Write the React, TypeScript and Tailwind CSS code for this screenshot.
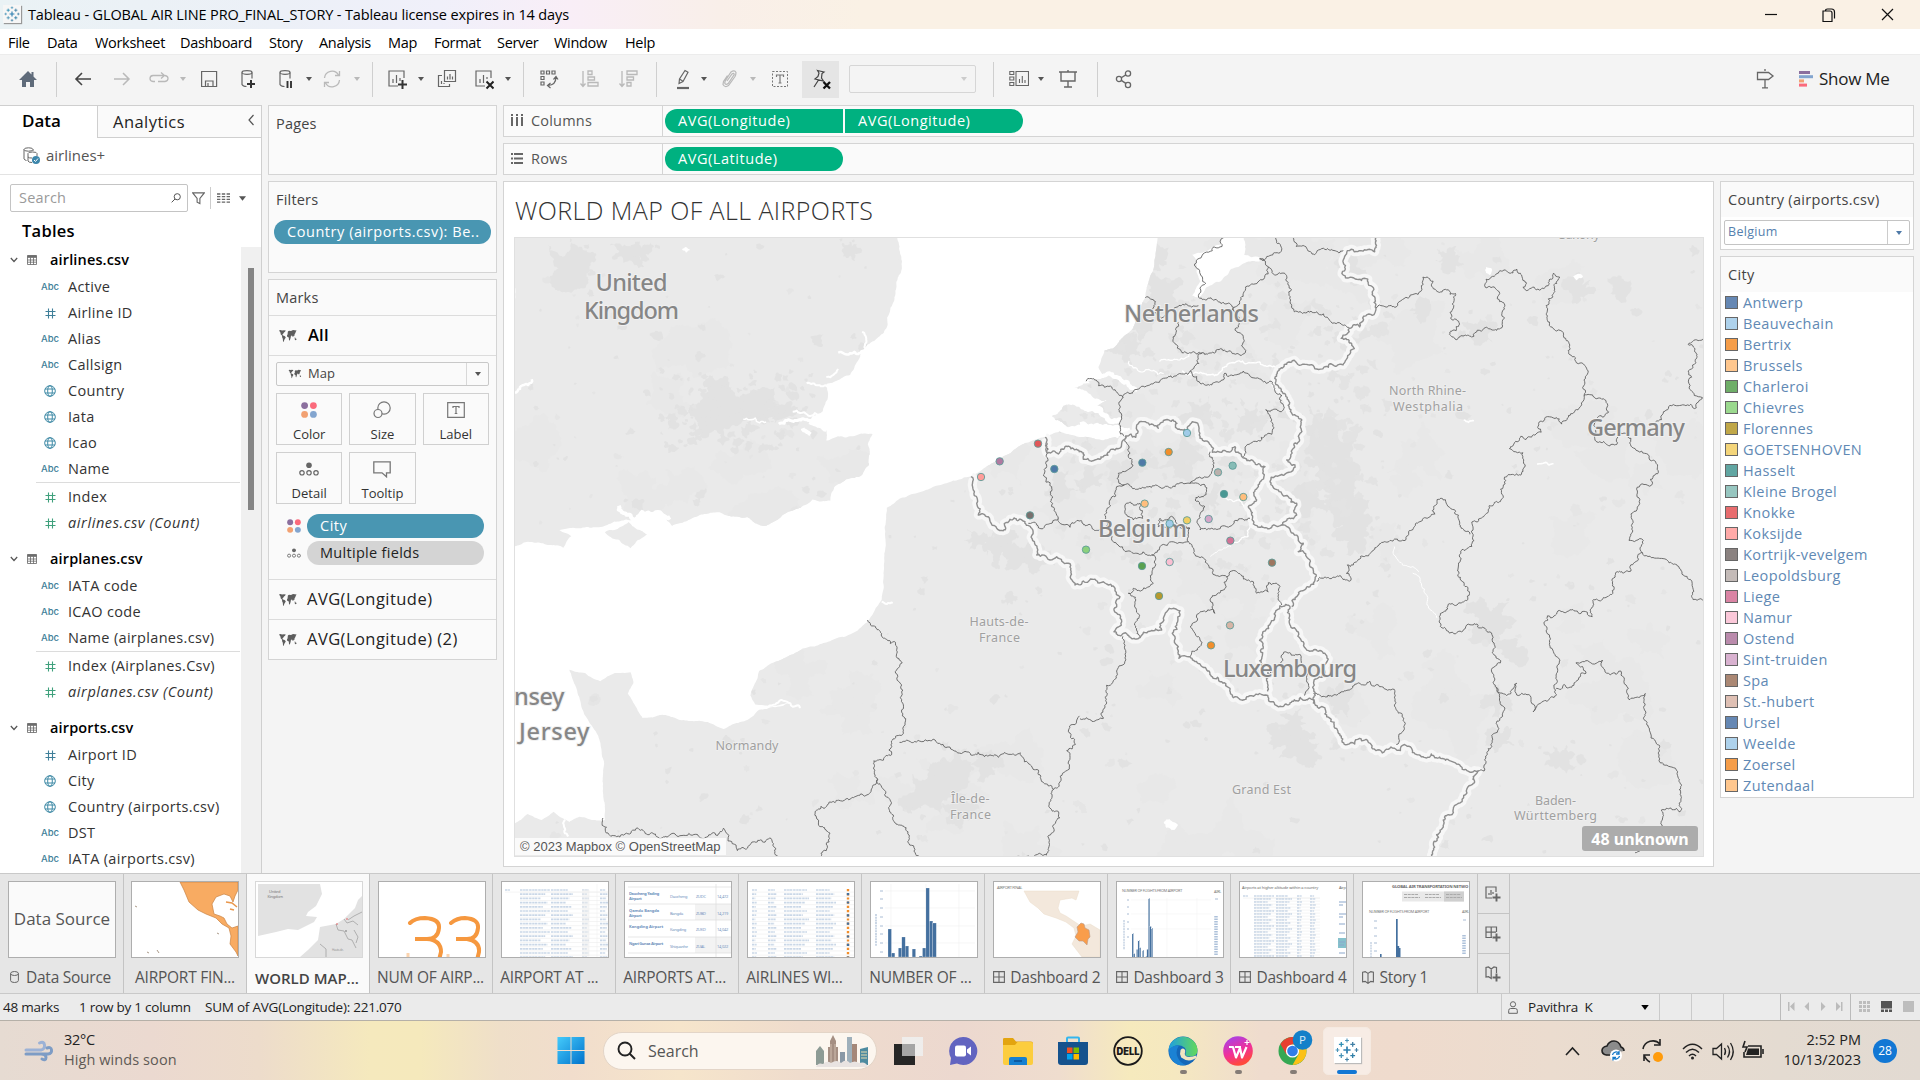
import React from "react";

/* ------------------------------------------------------------------ */
/* Geometry helpers                                                    */
/* ------------------------------------------------------------------ */
type P = [number, number];

function space(ox: number, oy: number, sx: number, sy: number) {
  return (s: string): P[] =>
    s
      .trim()
      .split(/\s+/)
      .map((t) => {
        const [x, y] = t.split(",").map(Number);
        return [ox + x / sx, oy + y / sy] as P;
      });
}
const W = space(510, 220, 2.529, 2.45);
const E = space(1080, 220, 2.45, 2.45);
const C = space(960, 400, 3, 3);

function rng(seed: number) {
  let a = seed >>> 0;
  return () => {
    a = (a + 0x6d2b79f5) >>> 0;
    let t = a;
    t = Math.imul(t ^ (t >>> 15), t | 1);
    t ^= t + Math.imul(t ^ (t >>> 7), t | 61);
    return ((t ^ (t >>> 14)) >>> 0) / 4294967296;
  };
}

function rough(pts: P[], amp = 0.3, closed = false, seed = 7): string {
  const r = rng(seed + Math.round(pts[0][0] * 13 + pts[0][1]));
  const out: P[] = [];
  const split = (a: P, b: P) => {
    const dx = b[0] - a[0];
    const dy = b[1] - a[1];
    const len = Math.hypot(dx, dy);
    if (len < 2.2) {
      out.push(b);
      return;
    }
    const k = (r() - 0.5) * 2 * Math.min(amp, 3 / len);
    const m: P = [(a[0] + b[0]) / 2 - dy * k, (a[1] + b[1]) / 2 + dx * k];
    split(a, m);
    split(m, b);
  };
  out.push(pts[0]);
  const all = closed ? [...pts, pts[0]] : pts;
  for (let i = 1; i < all.length; i++) split(all[i - 1], all[i]);
  return (
    out
      .map((p, i) => (i ? "L" : "M") + p[0].toFixed(1) + " " + p[1].toFixed(1))
      .join("") + (closed ? "Z" : "")
  );
}

/* ------------------------------------------------------------------ */
/* Map data                                                            */
/* ------------------------------------------------------------------ */
const britain = rough(
  W(
    "8,35 975,35 985,75 988,130 975,180 962,215 952,265 935,285 905,305 880,345 860,380 830,392 800,402 803,440 790,470 765,480 755,500 800,515 800,540 860,530 917,524 905,550 908,600 890,625 850,635 820,655 810,688 765,685 735,705 690,722 645,750 600,728 530,716 470,728 410,750 390,722 330,712 310,735 250,745 180,755 125,760 155,775 135,803 90,795 35,790 8,800",
  ),
  0.09,
  true,
);
const wight = rough(W("240,765 300,740 347,770 305,804"), 0.1, true);
const continent = rough(
  [
    ...W(
      "8,1568 8,1480 45,1455 80,1470 110,1450 150,1475 175,1462 240,1470 240,1440 235,1390 238,1330 225,1270 200,1230 180,1190 165,1140 150,1102 190,1110 228,1130 265,1110 305,1108 312,1135 298,1160 320,1195 335,1220 385,1212 430,1225 500,1230 540,1247 600,1225 630,1200 710,1182 660,1192 620,1187 608,1165 630,1105 680,1080 740,1050 800,1035 850,1020 905,985 925,950 940,930 945,870 950,800 953,705 985,683 1050,662 1165,628 1230,590 1300,548 1350,532 1390,518 1440,532 1500,540 1545,530",
    ),
    ...E("95,500 60,480 40,455 70,440 30,410 20,395 60,385 45,360 60,320 80,315 130,265 160,190 180,120 190,35 1540,35 1540,1568"),
  ],
  0.06,
  true,
);
const islands = [
  W("1370,480 1400,455 1450,465 1500,475 1560,480 1560,505 1480,510 1420,512"),
  W("1425,412 1460,400 1510,405 1570,440 1540,450 1480,438"),
].map((p) => rough(p, 0.15, true));
const waters = [
  rough(E("285,100 275,85 300,80 345,60 350,35 400,35 402,85 440,92 440,102 370,120 345,150 310,165 290,190 275,185 295,150"), 0.1, true),
  rough(E("205,1475 220,1468 240,1482 225,1495"), 0.2, true),
  rough(E("995,115 1008,118 1005,135 995,130"), 0.2, true),
  rough(E("1208,138 1225,132 1232,140 1215,148"), 0.2, true),
  rough(W("435,72 445,66 456,74 445,80"), 0.2, true),
];
const streams: [P[], number][] = [
  [W("900,322 860,326 830,325"), 2.5],
  [W("905,318 890,275"), 2],
  [W("805,408 780,405 750,400"), 2],
  [W("800,385 830,365"), 2],
  [W("790,475 715,470"), 2],
  [W("680,500 730,490 770,500 800,515"), 3],
  [W("740,510 760,525"), 4],
  [W("590,488 620,485 648,495"), 1.4],
  [W("275,700 300,722 335,740"), 4],
  [W("330,715 405,728"), 4],
  [W("8,430 55,390"), 2.5],
  [W("630,1192 700,1180 735,1195"), 2],
  [W("140,1470 148,1510"), 2],
  [W("940,935 968,938"), 2],
  [W("1400,518 1470,505 1520,525 1568,515"), 5],
  [E("0,455 40,460 70,490 100,490"), 5],
  [E("0,500 50,515 95,530"), 4],
  [E("40,380 90,385 140,415"), 4],
  [E("120,345 130,362 190,378 205,376"), 1.2],
  [E("195,347 240,343 270,325"), 1.2],
  [E("250,370 340,375 370,350 440,348 480,360"), 1.4],
  [E("770,800 790,845 830,862"), 1],
  [E("815,865 850,920 850,940 875,975"), 1],
  [E("350,680 390,685 415,710"), 1.2],
  [E("418,750 412,775 370,790"), 1.2],
  [E("320,825 370,800"), 1],
  [E("940,490 965,492"), 1.6],
  [E("1120,598 1160,597"), 1.6],
];
const nations: string[] = [
  rough([
    ...C(
      "33,230 40,270 50,310 55,345 85,350 110,385 130,392 150,358 195,365 215,385 230,465 270,480 290,470 325,490 345,555 370,543 430,545 465,572 480,590 462,630 485,665 462,695 485,705 540,713 605,690 610,655 640,625 660,632 650,670 637,700 655,740 657,775 690,770 740,810 780,845 810,865 820,893",
    ),
    ...E(
      "440,1160 460,1165 500,1190 540,1170 575,1185 600,1195 625,1245 655,1285 685,1270 725,1300 785,1300 795,1285 840,1315 920,1330 975,1350 940,1410 890,1470 875,1520 868,1568",
    ),
  ]),
  rough(
    C(
      "255,112 262,160 295,162 315,140 365,155 370,178 420,178 465,150 490,120 497,108 527,112 530,75 560,68 595,85 615,60 640,60 650,85 680,95 697,65 715,75 720,115 752,135 757,157 800,155 825,140 855,175 915,200 905,240 885,270 890,300 865,320 875,345 880,372 930,385 965,375 1000,400 1030,430 1015,455 1050,480 1065,540 1050,560 1010,590 995,620",
    ),
  ),
  rough([
    ...C("965,375 1010,345 1010,310 985,290 955,270 930,245 1005,195 980,180 1000,145 1020,100 1015,50 985,0"),
    ...E("480,395 485,370 520,345 580,365 650,345 672,315 640,290 660,265 685,262 700,235 725,220 720,170 705,145 645,135 645,105 655,75 722,78 722,35"),
  ]),
  rough(E("515,950 490,945 440,1030 440,1080 465,1115 460,1155")),
  rough(E("515,950 520,1000 560,1055 605,1070 600,1110 570,1145 572,1185")),
];
const regions: string[] = [
  ...[
    "352,35 348,65 285,100 308,155 290,185 300,195 375,220 400,180 450,145 462,115 440,95 490,80 478,35",
    "520,35 530,65 575,85 600,72 645,75",
    "462,115 480,135 500,130 518,170 515,200 525,225 580,225 640,255 660,265",
    "160,190 185,200 175,225 200,240 260,205 290,210",
    "240,250 230,300 250,325 300,325 350,320 405,325 400,290 380,270 385,230 372,218",
    "300,325 270,370 200,390 140,415 105,435 60,410 40,392 15,395",
    "270,370 300,400 345,395 355,375 400,370 465,395",
    "105,435 98,460 108,530",
    "465,395 495,430 498,465 455,465 470,525 410,550 400,580",
    "725,215 775,213 835,175 840,140 865,150 875,175 920,180 915,215 908,240 930,255 905,280 925,292 965,285 990,265 1030,265 1040,240 1028,200 1020,170 993,165 995,145 1025,130 1070,120 1082,135 1085,165 1140,165 1160,130 1175,140 1160,180 1142,210 1150,250 1190,290 1200,330 1245,370 1235,430",
    "1235,430 1220,465 1180,500 1160,485 1125,495 1130,520 1080,530 1052,560 1085,570 1090,605 1080,625 1040,630 1030,690 1000,710 960,740 960,800 930,820 925,860 950,900 950,930 905,940 880,985 905,1012 960,992 1000,1010 1010,1060 1030,1085 1008,1105 1020,1145",
    "580,885 620,875 660,885 655,845 680,835 760,785 800,775 830,740 870,720 875,685 895,685 930,740 955,770",
    "1235,430 1285,440 1295,470 1260,500 1270,545 1315,550 1320,520 1350,535 1360,560 1415,600 1400,650 1365,655 1370,690 1350,720 1345,785 1380,785 1378,815 1350,860 1312,865 1305,915 1258,930 1255,972 1200,955 1145,970 1150,1040 1170,1100 1165,1160 1110,1205 1105,1170 1075,1165 1070,1135 1045,1165 1020,1145 1040,1200 1010,1280 990,1350 975,1350",
    "1378,815 1440,835 1500,890 1502,930 1540,932",
    "1410,495 1450,455 1510,460 1525,435 1505,430 1490,370 1510,340 1490,305 1540,290",
    "1165,1150 1210,1140 1240,1110 1215,1085 1280,1078 1290,1110 1325,1105 1345,1175 1385,1160 1395,1250 1420,1320 1465,1365 1470,1450 1425,1445 1430,1490 1360,1550",
    "572,1160 620,1165 710,1130 770,1150 775,1200 795,1230 775,1285",
    "465,1110 490,1090 495,1065 540,1065 555,1100 550,1165",
    "0,1222 58,1220 65,1140 105,1090 105,1020",
  ].map((s) => rough(E(s))),
  ...[
    "1440,1215 1415,1240 1430,1285 1408,1300 1415,1335 1375,1395 1310,1330 1290,1305 1200,1315 1060,1275 985,1280",
    "905,980 975,1035 992,1085 975,1110 990,1180 995,1250 975,1265 965,1310 920,1325 930,1370 950,1400 960,1450 1010,1515 1040,1568",
    "930,1370 900,1410 850,1418 778,1445 780,1480 808,1515 800,1545 775,1568",
    "1375,1395 1365,1440 1390,1465 1360,1510 1360,1550 1280,1568",
    "235,1465 255,1510 310,1495 400,1510 470,1505 525,1508 540,1490 575,1545 660,1515 680,1568",
  ].map((s) => rough(W(s))),
  ...[
    "257,130 260,200 250,225 275,260 275,320 295,355 250,385 205,370",
    "295,355 330,382 350,362 395,380 440,385 455,420 520,460 575,465 585,490 580,550 520,565 505,580 528,600 540,713",
    "497,108 510,160 510,205 475,220 477,250 530,268 600,262 690,250 755,215 760,180 750,155",
    "490,252 450,300 440,360 440,385",
    "690,250 735,255 730,290 705,300 735,320 720,390 800,380 870,355",
    "575,465 600,440 685,425 690,385 595,380 600,355 640,352 650,370 690,385",
    "685,425 715,470 765,525 800,530 810,515 830,515 880,545 890,580 925,575 925,548 960,560 965,615",
    "800,530 795,565 750,600 765,640 710,645 690,680 720,720 690,770",
    "495,315 540,310 548,355 520,360 495,340 495,315",
  ].map((s) => rough(C(s))),
];

const patches: { d: string; f: string }[] = (() => {
  const r = rng(91);
  const out: { d: string; f: string }[] = [];
  const blob = (x: number, y: number, rad: number, f: string, n = 7, low = 0.55) => {
    const pts: P[] = [];
    for (let i = 0; i < n; i++) {
      const a = (i / n) * Math.PI * 2;
      const q = rad * (low + r() * (1.15 - low));
      pts.push([x + Math.cos(a) * q, y + Math.sin(a) * q * 0.9]);
    }
    out.push({ d: rough(pts, 0.3, true), f });
  };
  for (let i = 0; i < 80; i++) blob(515 + r() * 1188, 238 + r() * 618, 20 + r() * 26, "#e8e8e8", 12, 0.3);
  const big: [number, number, number][] = [
    [570, 265, 24], [628, 252, 18], [735, 408, 36], [715, 420, 24], [760, 400, 26], [780, 412, 20], [640, 252, 12],
    [1160, 290, 22], [1140, 320, 20], [1155, 260, 15], [1125, 350, 18], [1200, 415, 22], [1250, 420, 20], [1130, 470, 20], [1180, 460, 22],
    [1320, 430, 24], [1330, 470, 26], [1345, 500, 24], [1310, 500, 18], [1355, 535, 20], [1330, 450, 22],
    [930, 790, 30], [950, 770, 22], [960, 810, 20], [985, 765, 16], [1000, 545, 20], [1020, 555, 18], [1040, 560, 16], [980, 540, 14],
    [1490, 620, 26], [1510, 650, 20], [1500, 700, 18], [1500, 740, 16], [1290, 735, 20], [1300, 750, 22], [1295, 720, 14], [1340, 700, 16],
    [1060, 490, 18], [1090, 480, 14], [1210, 500, 14], [1580, 290, 16], [1480, 330, 16], [1620, 290, 14], [1450, 260, 14], [1560, 760, 14], [1350, 270, 14],
    [1010, 600, 8], [1420, 310, 12], [850, 250, 10],
  ];
  big.forEach(([x, y, s]) => blob(x, y, s * 1.15, "#e2e2e2", 16, 0.3));
  for (let i = 0; i < 560; i++) blob(515 + r() * 1188, 238 + r() * 618, 1.5 + r() * r() * 8, r() > 0.35 ? "#e2e2e2" : "#e5e5e5", 7, 0.4);
  for (let i = 0; i < 260; i++) blob(1060 + r() * 330, 300 + r() * 270, 2 + r() * 7, "#e3e3e3", 8, 0.3);
  for (let i = 0; i < 90; i++) blob(660 + r() * 160, 370 + r() * 80, 2 + r() * 6, "#e2e2e2", 8, 0.3);
  return out;
})();

const dots: [number, number, string][] = [
  [234, 131, "#e15759"], [119, 184, "#b07aa1"], [63, 231, "#ff9d9a"], [283, 207, "#4e79a7"], [547, 188, "#4e79a7"],
  [626, 156, "#f28e2b"], [681, 99, "#a0cbe8"], [818, 197, "#86bcb6"], [774, 217, "#bab0ac"], [792, 282, "#499894"],
  [850, 291, "#ffbe7d"], [554, 311, "#ffbe7d"], [681, 361, "#f1ce63"], [629, 371, "#a0cbe8"], [746, 357, "#d4a6c8"],
  [811, 422, "#d37295"], [210, 346, "#79706e"], [378, 449, "#8cd17d"], [546, 498, "#59a14f"], [629, 486, "#fabfd2"],
  [936, 488, "#9d7660"], [597, 588, "#b6992d"], [810, 676, "#d7b5a6"], [753, 736, "#f28e2b"],
];

const placeNames: [string, number, number, number, number][] = [
  ["United", 595.5, 290.5, 72, 23.5],
  ["Kingdom", 584, 318.5, 95, 23.5],
  ["Netherlands", 1124, 322, 135, 23.5],
  ["Belgium", 1098, 536.5, 89, 23.5],
  ["Luxembourg", 1223, 676.5, 134, 23.5],
  ["Germany", 1587, 436, 98, 23.5],
  ["nsey", 514, 705, 50.5, 23.5],
  ["Jersey", 519, 739.5, 70.5, 23.5],
];
const regionNames: [string, number, number, number][] = [
  ["North Rhine-", 1389, 395, 77],
  ["Westphalia", 1393, 410.5, 70],
  ["Hauts-de-", 969.5, 626, 59],
  ["France", 979, 641.5, 41],
  ["Normandy", 715.5, 750, 63],
  ["Île-de-", 951, 803, 38.5],
  ["France", 950, 818.5, 41],
  ["Grand Est", 1232, 794, 59],
  ["Baden-", 1535, 805, 41],
  ["Württemberg", 1514, 820, 83],
  ["Saxony", 1559, 238.5, 41],
];

function BaseMap() {
  return (
    <svg viewBox="515 238 1188 618" className="block h-full w-full" preserveAspectRatio="none">
      <defs>
        <clipPath id="land">
          <path d={britain} />
          <path d={wight} />
          <path d={continent} />
          {islands.map((d, i) => (
            <path key={i} d={d} />
          ))}
        </clipPath>
      </defs>
      <rect x="515" y="238" width="1188" height="618" fill="#fff" />
      <g clipPath="url(#land)">
        <rect x="515" y="238" width="1188" height="618" fill="#eaeaea" />
        {patches.map((p, i) => (
          <path key={i} d={p.d} fill={p.f} />
        ))}
      </g>
      {waters.map((d, i) => (
        <path key={i} d={d} fill="#fff" />
      ))}
      {streams.map(([p, w], i) => (
        <path key={i} d={rough(p, 0.25)} fill="none" stroke="#fff" strokeWidth={w} strokeLinejoin="round" />
      ))}
      {nations.map((d, i) => (
        <path key={i} d={d} fill="none" stroke="#f7f7f7" strokeWidth="9" strokeLinejoin="round" />
      ))}
      {regions.map((d, i) => (
        <path key={i} d={d} fill="none" stroke="#585858" strokeWidth="0.85" />
      ))}
      {nations.map((d, i) => (
        <path key={i} d={d} fill="none" stroke="#8e8e8e" strokeWidth="1.400" strokeLinejoin="round" />
      ))}
      {placeNames.map(([t, x, y, w, s]) => (
        <text key={t} x={x} y={y} textLength={w} fontSize={s} fontWeight="500" fontFamily="'Noto Sans', sans-serif" fill="#868686" stroke="#f0f0f0" strokeWidth="2" paintOrder="stroke">
          {t}
        </text>
      ))}
      {regionNames.map(([t, x, y, w], i) => (
        <text key={i} x={x} y={y} textLength={w} fontSize="12.5" fontFamily="'Noto Sans', sans-serif" fill="#a0a0a0" stroke="#f0f0f0" strokeWidth="1.5" paintOrder="stroke">
          {t}
        </text>
      ))}
      {dots.map(([x, y, c], i) => (
        <circle key={i} cx={960 + x / 3} cy={400 + y / 3} r="3.7" fill={c} stroke="#5f9c98" strokeWidth="0.9" />
      ))}
    </svg>
  );
}

/* ------------------------------------------------------------------ */
/* Icons                                                               */
/* ------------------------------------------------------------------ */
function I({ children, c = "#666", k = "h-[22px] w-5", vb = "0 0 20 22", sw = 1.2 }: { children: React.ReactNode; c?: string; k?: string; vb?: string; sw?: number }) {
  return (
    <svg viewBox={vb} className={`${k} shrink-0`} fill="none" stroke={c} strokeWidth={sw}>
      {children}
    </svg>
  );
}
function Caret({ c = "#555", k = "" }: { c?: string; k?: string }) {
  return (
    <svg viewBox="0 0 6 4" className={`h-1 w-1.5 shrink-0 ${k}`}>
      <path d="M0 0H6L3 4Z" fill={c} />
    </svg>
  );
}
const Sep = ({ k = "" }: { k?: string }) => <span className={`h-[35px] w-px shrink-0 bg-[#cfcfcf] ${k}`} />;

const World = ({ k = "h-3.5 w-[18px]" }: { k?: string }) => (
  <svg viewBox="0 0 18 14" className={`${k} shrink-0`}>
    <path
      d="M0 1.600L1.500 1l1.500.4L5 1.200 6.800 1.600 6 2.800 5 3.600 4.200 4.800 3.400 5.200 4 6.400 5.600 7 6.800 8.200 6 9.800 5.200 11 4.800 13 4 12.200 3.800 9.800 3 8 3.200 6.800 1.800 5.400 1.400 3.400ZM8.200 4.200L9 3.200 8.800 2.400 10 1.800 12 2 14 1 17.600 1.600 16.800 2.800 16.400 4 15.600 5.200 15.400 6.800 14.600 7.800 14 6.600 13.200 8 12.600 6.400 12 6.800 11.600 9 10.800 11.400 10 11.200 9.800 8.600 8.200 7.800 8 6 9.200 4.800ZM15.400 9.600L17 9.200 17.600 10.800 16.200 11.200ZM15.600 8l.8.600-.4.400Z"
      fill="#5d5d5d"
    />
  </svg>
);
const Abc = () => <span className="font-['Inter',sans-serif] text-[9.500px] font-medium leading-none text-[#3f7f99]">Abc</span>;
const Hash = ({ c }: { c: string }) => (
  <I c={c} k="h-[11px] w-[11px]" vb="0 0 11 11" sw={1.1}>
    <path d="M3.500 .5v10M7.500 .5v10M.5 3.500h10M.5 7.500h10" />
  </I>
);
const Globe = () => (
  <I c="#3f8aa6" k="h-3 w-3" vb="0 0 12 12" sw={1}>
    <circle cx="6" cy="6" r="5.300" />
    <ellipse cx="6" cy="6" rx="2.300" ry="5.300" />
    <path d="M1 4h10M1 8h10" />
  </I>
);
const FourDots = ({ k = "h-4 w-4" }: { k?: string }) => (
  <svg viewBox="0 0 16 16" className={k}>
    <circle cx="3.600" cy="3.600" r="3.400" fill="#8b6f9e" />
    <circle cx="12.400" cy="3.600" r="3.400" fill="#fb6a7c" />
    <circle cx="3.600" cy="12.400" r="3.400" fill="#f2a172" />
    <circle cx="12.400" cy="12.400" r="3.400" fill="#83a5cf" />
  </svg>
);
const Detail = ({ k = "h-3.5 w-5" }: { k?: string }) => (
  <I k={k} vb="0 0 20 14" sw={1.2}>
    <circle cx="10" cy="3.200" r="2.800" fill="#666" stroke="none" />
    <circle cx="3" cy="10.800" r="2.200" />
    <circle cx="10" cy="10.800" r="2.200" />
    <circle cx="17" cy="10.800" r="2.200" />
  </I>
);
const DashIcon = () => (
  <I k="h-3 w-3" vb="0 0 12 12" sw={1.1}>
    <path d="M.6 .6h10.800v10.800H.6zM6 .6v10.800M.6 6h10.800" />
  </I>
);
const StoryIcon = () => (
  <I k="h-[13px] w-3" vb="0 0 12 13" sw={1.1}>
    <path d="M.6 1.200l2.600-.6L6 2.400 8.800 .6l2.600 .6v9.600l-2.600-.4L6 12.400 3.200 10.400l-2.600 .4zM6 2.400v10" />
  </I>
);
function TableauMark({ k = "" }: { k?: string }) {
  const plus = (x: number, y: number, s: number, c: string, w: number) => <path d={`M${x - s} ${y}h${2 * s}M${x} ${y - s}v${2 * s}`} stroke={c} strokeWidth={w} />;
  return (
    <svg viewBox="0 0 24 24" className={k}>
      {plus(12, 12, 3.6, "#2e7fb0", 1.7)}
      {plus(6.3, 6.3, 2.4, "#2f8fb5", 1.3)}
      {plus(17.7, 6.3, 2.4, "#3f7fa5", 1.3)}
      {plus(6.3, 17.7, 2.4, "#4a94b8", 1.3)}
      {plus(17.7, 17.7, 2.4, "#2f7fa8", 1.3)}
      {plus(12, 2.5, 1.9, "#4a94b8", 1.1)}
      {plus(12, 21.5, 1.9, "#3f7fa5", 1.1)}
      {plus(2.5, 12, 1.9, "#4a94b8", 1.1)}
      {plus(21.5, 12, 1.9, "#3f7fa5", 1.1)}
    </svg>
  );
}

/* ------------------------------------------------------------------ */
/* Window chrome                                                       */
/* ------------------------------------------------------------------ */
function TitleBar() {
  return (
    <div className="flex h-[29px] shrink-0 items-center bg-[linear-gradient(90deg,#eaf2f5_0px,#ecf0f7_280px,#f0f0fa_440px,#f9eef7_570px,#f9efe9_720px,#faf1e5_860px,#faf1e5_100%)]">
      <span className="mb-px ml-[3px] grid h-[18px] w-[18px] place-items-center bg-[#f6f6f6] shadow-[1px_1px_1px_#999]">
        <TableauMark k="h-4 w-4" />
      </span>
      <span className="ml-[7px] whitespace-nowrap text-[14.5px] tracking-[-0.13px] text-black">Tableau - GLOBAL AIR LINE PRO_FINAL_STORY - Tableau license expires in 14 days</span>
      <svg viewBox="0 0 140 20" className="ml-auto mr-[21px] h-5 w-[140px]" fill="none" stroke="#111" strokeWidth="1.200">
        <path d="M6 9.500h12" />
        <path d="M64 6h7q2 0 2 2v8.500h-9zM66.500 6q0-2 2-2h4q3 0 3 3v6.500" />
        <path d="M123 4l11 11M134 4l-11 11" />
      </svg>
    </div>
  );
}

const menus: [string, string][] = [
  ["File", "w-[39px]"], ["Data", "w-12"], ["Worksheet", "w-[85px]"], ["Dashboard", "w-[89px]"], ["Story", "w-[50px]"], ["Analysis", "w-[69px]"],
  ["Map", "w-[46px]"], ["Format", "w-[63px]"], ["Server", "w-[57px]"], ["Window", "w-[71px]"], ["Help", "w-10"],
];

function Toolbar() {
  const g = "#b9b9b9";
  return (
    <div className="flex h-[51px] shrink-0 items-center border-t border-[#ececec] bg-[#f4f4f4] pb-[2px]">
      <svg viewBox="0 0 20 20" className="ml-[18px] h-5 w-5">
        <path d="M10 2L1 11h3v7h4v-5h4v5h4v-7h3L15.500 7.400V3h-2v2.500z" fill="#5f6b7a" />
      </svg>
      <Sep k="ml-[18px]" />
      <span className="ml-4"><I c="#444" sw={1.6}><path d="M18 11H3M9 5L3 11l6 6" /></I></span>
      <span className="ml-[19px]"><I c={g} sw={1.5}><path d="M2 11h15M11 5l6 6-6 6" /></I></span>
      <span className="ml-[17px]"><I c={g} sw={1.3}><path d="M6 13.500H4q-3-.3-3-3t3-3h11M12 4.500l3.500 3-3.500 3M16 7.500q3 .5 3 3t-3 3H9" /></I></span>
      <Caret c={g} k="ml-[11px]" />
      <span className="ml-[13px]"><I><path d="M2.600 3.500h15v15h-15zM6.500 18.500v-5.500h7.500v5.500M9 15v3.500" /></I></span>
      <span className="ml-[19px]"><I><ellipse cx="9" cy="4.500" rx="5" ry="1.800" /><path d="M4 4.500v12q1 2 4.500 2M14 4.500v6" /><path d="M13 12v8M9 16h8" stroke="#333" strokeWidth="2" /></I></span>
      <span className="ml-[18px]"><I><ellipse cx="9" cy="4.500" rx="5" ry="1.800" /><path d="M4 4.500v12q1 2 4.500 2M14 4.500v6" /><path d="M11.500 13v7M15 13v7" stroke="#333" strokeWidth="1.900" /></I></span>
      <Caret k="ml-2.5" />
      <span className="ml-2.5"><I c={g} sw={1.3}><path d="M2.500 10a7.500 7.500 0 0 1 14-3M17.500 12a7.500 7.500 0 0 1-14 3M17.500 3v4.500H13M2.500 19v-4.500H7" /></I></span>
      <Caret c={g} k="ml-3" />
      <Sep k="ml-3" />
      <span className="ml-3.5"><I><path d="M17 10V3H2v15h9M6 15v-4M9.500 15V7M13 13v-3" /><path d="M15.500 12v9M11 16.500h9" stroke="#333" strokeWidth="2" /></I></span>
      <Caret k="ml-[11px]" />
      <span className="ml-[13px]"><I><path d="M7.500 2.500h11v11h-11zM10.500 11.500v-3M13 11.500V6M15.500 11.500v-3M5 7.500H1.500V18.500H12.500V16M4.500 16v-3M7 16v-1" /></I></span>
      <span className="ml-[17px]"><I><path d="M17 10V3H2v15h9M6 15v-4M9.500 15V7M13 11v-2" /><path d="M12.500 13.500l7 7M19.500 13.500l-7 7" stroke="#222" strokeWidth="2" /></I></span>
      <Caret k="ml-[11px]" />
      <Sep k="ml-3" />
      <span className="ml-[15px]"><I><path d="M2 3h3v3H2zM7.500 3h3v3h-3zM13 3h3v3h-3zM2 8.500h3v3H2zM2 14h3v3H2zM17 9q0 8-8 8.500M11.500 15l-3 2.500 3 2.500M14.500 11.500L17 8.500l2 3" /></I></span>
      <span className="ml-5"><I c={g} sw={1.3}><path d="M4 3v15M1.500 15.500L4 18.500l2.500-3M9 3h4v3.500H9zM9 9h6.500v3H9zM9 14.500h10v3.500H9z" /></I></span>
      <span className="ml-[19px]"><I c={g} sw={1.3}><path d="M4 3v15M1.500 15.500L4 18.500l2.500-3M9 3h10v3.500H9zM9 9h6.500v3H9zM9 14.500h4v3.500H9z" /></I></span>
      <Sep k="ml-[18px]" />
      <span className="ml-4"><I><path d="M6 15.500l.5-4.500L12 2.500l3 1.800L10 13.500zM6.500 11l3.500 2.300" /><path d="M4 20h12" strokeWidth="2.200" /></I></span>
      <Caret k="ml-2" />
      <span className="ml-3"><I c={g}><path d="M8 13l5-7q2-1.500 2.200.5l-6 9q-2.500 2-3.500-.5l.5-2L12 4q3.500-2.500 5 .5 0 2-1 4l-6.500 9q-3.500 2.500-5.500-1l.5-3 4-6" /></I></span>
      <Caret c={g} k="ml-[11px]" />
      <span className="ml-3.5">
        <I c="#777"><path d="M2.500 3.500h15v15h-15z" strokeDasharray="2 1.500" strokeWidth="1" /><path d="M6.500 9V7h7v2M10 7v8M8.500 15h3" /></I>
      </span>
      <span className="ml-3 grid h-[37px] w-[37px] place-items-center bg-[#e5e5e5]">
        <I c="#444"><path d="M6.500 2.500l6.500 1.500-2 1.500-.5 4.500 2 3L4 11l3-2.500L8 5zM7.500 12L3 19" /><path d="M12.500 14l6.500 6.500M19 14l-6.500 6.500" stroke="#111" strokeWidth="2.300" /></I>
      </span>
      <span className="ml-2.5 flex h-7 w-[127px] items-center justify-end rounded-[2px] border border-[#d6d6d6] bg-[#f4f4f4] pr-2">
        <Caret c="#ccc" />
      </span>
      <Sep k="ml-[17px]" />
      <span className="ml-[15px]"><I sw={1.1}><path d="M.8 3.500h4v3h-4zM.8 9h4v3h-4zM.8 14.500h4v3h-4zM7 3.500h12.500v14H7zM10.500 15v-4M13.300 15V8M16 15v-3" /></I></span>
      <Caret k="ml-[9px]" />
      <span className="ml-3.5"><I sw={1.4}><path d="M1 4h18M3 4v9h14V4M10 2v2M10 13v6M6 19h8" /></I></span>
      <Sep k="ml-[19px]" />
      <span className="ml-4"><I sw={1.3}><circle cx="5" cy="11" r="2.600" /><circle cx="14" cy="5.500" r="2.600" /><circle cx="14" cy="17" r="2.600" /><path d="M7.300 9.700l4.500-2.800M7.300 12.400l4.500 3" /></I></span>
      <span className="ml-auto"><I sw={1.3}><path d="M10 1v2M2.500 4.500h11l4.500 3.500-4.500 3.500h-11zM10 11.500v8M7 19.800h6" /></I></span>
      <svg viewBox="0 0 14 16" className="ml-[24px] h-4 w-3.5">
        <rect width="11" height="3" fill="#8b6f9e" />
        <rect y="4.200" width="14" height="3" fill="#83a5cf" />
        <rect y="8.400" width="5" height="3" fill="#f2a172" />
        <rect y="12.600" width="8" height="3" fill="#fb6a7c" />
      </svg>
      <span className="ml-[6px] mr-[29px] w-[72px] whitespace-nowrap text-[17px] tracking-[-0.25px] text-[#222]">Show Me</span>
    </div>
  );
}

/* ------------------------------------------------------------------ */
/* Data pane                                                           */
/* ------------------------------------------------------------------ */
type Row = [string, string, boolean?];
const tables: { name: string; dims: Row[]; meas: Row[] }[] = [
  {
    name: "airlines.csv",
    dims: [["a", "Active"], ["b", "Airline ID"], ["a", "Alias"], ["a", "Callsign"], ["g", "Country"], ["g", "Iata"], ["g", "Icao"], ["a", "Name"]],
    meas: [["m", "Index"], ["m", "airlines.csv (Count)", true]],
  },
  {
    name: "airplanes.csv",
    dims: [["a", "IATA code"], ["a", "ICAO code"], ["a", "Name (airplanes.csv)"]],
    meas: [["m", "Index (Airplanes.Csv)"], ["m", "airplanes.csv (Count)", true]],
  },
  {
    name: "airports.csv",
    dims: [["b", "Airport ID"], ["g", "City"], ["g", "Country (airports.csv)"], ["a", "DST"], ["a", "IATA (airports.csv)"]],
    meas: [],
  },
];
function FieldRow({ r }: { r: Row }) {
  const [t, n, it] = r;
  return (
    <div className="flex h-[26px] items-center text-[14.5px] text-[#333]">
      <span className="ml-9 grid w-7 place-items-center">
        {t === "a" ? <Abc /> : t === "b" ? <Hash c="#3f7f99" /> : t === "g" ? <Globe /> : <Hash c="#3fa07c" />}
      </span>
      <span className={`ml-1 whitespace-nowrap ${it ? "italic tracking-[0.600px]" : "tracking-[0.320px]"}`}>{n}</span>
    </div>
  );
}
function DataPane() {
  return (
    <div className="flex h-[768px] w-[262px] shrink-0 flex-col border-r border-t border-[#cfcfcf] bg-white">
      <div className="flex h-[32px] shrink-0">
        <div className="w-[97px] pl-[22px] text-[17px] font-semibold leading-[30px] text-black">Data</div>
        <div className="flex flex-1 justify-between border-b border-l border-[#cfcfcf] bg-[#fafafa] pl-[15px] text-[16.5px] leading-[32px] tracking-[0.450px] text-[#222]">
          Analytics
          <I k="mr-[6px] mt-2 h-3 w-2" vb="0 0 8 12" c="#555">
            <path d="M6.500 1L2 6l4.500 5" />
          </I>
        </div>
      </div>
      <div className="flex h-[37px] shrink-0 items-center border-b border-[#e3e3e3] pb-px pl-[23px] text-[15px] text-[#555]">
        <I k="h-[17px] w-[17px]" vb="0 0 17 17" sw={1}>
          <ellipse cx="5.500" cy="2.500" rx="4.500" ry="1.700" />
          <path d="M1 2.500v9.500q.5 1 2.500 1.500M10 2.500V4M5 6.500q0-1.500 4.500-1.500t4.500 1.500V9M5 6.500v7.500q.5 1.500 4 1.500M5 10q1 1.200 4 1" />
          <circle cx="13" cy="13" r="4" fill="#3c86ab" stroke="none" />
          <path d="M11 13l1.500 1.500 2.500-3" stroke="#fff" />
        </I>
        <span className="ml-[6px]">airlines+</span>
      </div>
      <div className="mt-[9px] flex h-[28px] shrink-0 items-center pl-[10px]">
        <div className="flex h-7 w-[178px] items-center justify-between rounded-[2px] border border-[#c4c4c4] pl-2 pr-[6px] text-[14.5px] tracking-[0.200px] text-[#9a9a9a]">
          Search
          <I k="h-2.5 w-2.5" vb="0 0 12 12" c="#555">
            <circle cx="7.500" cy="4.500" r="3.700" />
            <path d="M4.800 7.200L.8 11.200" />
          </I>
        </div>
        <I k="ml-1 h-[13px] w-[13px]" vb="0 0 14 14">
          <path d="M.8 1h12.400L8.500 7v5.500l-3-1.500V7z" />
        </I>
        <span className="ml-[5px] h-[22px] w-px bg-[#ccc]" />
        <I k="ml-[6px] h-[11px] w-[13px]" vb="0 0 13 11" sw={1.3}>
          <path d="M0 1h13M0 3.700h13M0 6.400h13M0 9.100h13" strokeDasharray="3.400 1.400" />
        </I>
        <Caret k="ml-[9px] !h-[5px] !w-[7px]" />
      </div>
      <div className="flex h-[35px] shrink-0 items-center pl-[22px] pt-[3px] text-[16.5px] font-semibold tracking-[0.250px] text-black">Tables</div>
      <div className="flex min-h-0 flex-1">
        <div className="w-[241px] overflow-hidden">
          {tables.map((t) => (
            <div key={t.name}>
              <div className="flex h-[26px] items-center text-[14.5px] font-semibold tracking-[0.150px] text-black">
                <I k="ml-[10px] h-2 w-2" vb="0 0 8 8" c="#555">
                  <path d="M.8 2L4 5.500 7.200 2" />
                </I>
                <I k="ml-[9px] h-[10px] w-[10px]" vb="0 0 10 10" sw={0.8}>
                  <path d="M.5 .5h9v9h-9zM.5 2.500h9M.5 5h9M.5 7.200h9M3.500 2.500v7M6.500 2.500v7" />
                  <path d="M.5 1.200h9" strokeWidth="1.500" />
                </I>
                <span className="ml-[13px]">{t.name}</span>
              </div>
              <div className="mt-px" />
              {t.dims.map((r) => (
                <FieldRow key={r[1]} r={r} />
              ))}
              {t.meas.length > 0 && (
                <>
                  <div className="mb-px ml-9 mr-px h-px bg-[#dcdcdc]" />
                  {t.meas.map((r) => (
                    <FieldRow key={r[1]} r={r} />
                  ))}
                  <div className="h-[10px]" />
                </>
              )}
            </div>
          ))}
        </div>
        <div className="w-5 bg-[#f0f0f0] pl-[7px] pt-[21px]">
          <div className="h-[242px] w-[6px] bg-[#858585]" />
        </div>
      </div>
    </div>
  );
}

/* ------------------------------------------------------------------ */
/* Cards                                                               */
/* ------------------------------------------------------------------ */
const card = "border border-[#d4d4d4] bg-[#fafafa]";
function MarkButton({ label, children }: { label: string; children: React.ReactNode }) {
  return (
    <div className="flex h-[52px] flex-col items-center border border-[#d0d0d0]">
      <span className="grid h-[32px] place-items-center">{children}</span>
      <span className="text-[13px] leading-[17px] text-[#333]">{label}</span>
    </div>
  );
}
function SideCards() {
  return (
    <div className="ml-[6px] flex w-[229px] shrink-0 flex-col text-[14.5px] tracking-[0.200px] text-[#444]">
      <div className={`${card} h-[70px] pl-[7px] pt-[8px] leading-5`}>Pages</div>
      <div className={`${card} mt-[6px] h-[92px] pl-[5px] pt-[8px]`}>
        <div className="pl-[2px] leading-5">Filters</div>
        <div className="mt-[10px] flex h-6 w-[217px] items-center whitespace-nowrap rounded-full bg-[#4996b2] pl-[13px] text-[14.500px] font-medium tracking-[0.550px] text-white">Country (airports.csv): Be..</div>
      </div>
      <div className={`${card} mt-[6px] h-[381px]`}>
        <div className="h-9 border-b border-[#dcdcdc] pl-[7px] pt-[8px] leading-5">Marks</div>
        <div className="flex h-10 items-center border-b border-[#dcdcdc] pl-[10px] text-[16.5px] font-semibold text-black">
          <World />
          <span className="ml-[11px]">All</span>
        </div>
        <div className="h-[224px] border-b border-[#dcdcdc] pl-[7px] pt-[6px]">
          <div className="flex h-6 w-[213px] items-center rounded-[2px] border border-[#c8c8c8] pl-[11px] text-[13px] tracking-normal">
            <World k="h-2.5 w-[14px]" />
            <span className="ml-[6px]">Map</span>
            <span className="ml-auto grid h-full w-[22px] place-items-center border-l border-[#d8d8d8]">
              <Caret />
            </span>
          </div>
          <div className="mt-[7px] grid w-[213px] grid-cols-3 gap-[7px] tracking-normal">
            <MarkButton label="Color"><FourDots /></MarkButton>
            <MarkButton label="Size">
              <I k="h-[18px] w-[18px]" vb="0 0 18 18" c="#777"><circle cx="11" cy="7" r="6.200" /><circle cx="5" cy="12.500" r="4" fill="#fafafa" /></I>
            </MarkButton>
            <MarkButton label="Label">
              <I k="h-4 w-[18px]" vb="0 0 18 16" c="#777"><path d="M.7 .7h16.600v14.600H.7z" /><path d="M6 6V4.500h6V6M9 4.500v7M7.700 11.500h2.600" /></I>
            </MarkButton>
            <MarkButton label="Detail"><Detail /></MarkButton>
            <MarkButton label="Tooltip">
              <I k="h-[17px] w-[18px]" vb="0 0 18 17" c="#777" sw={1.3}><path d="M.8 .8h16.400v11H13.500v4L9 11.800H.8z" /></I>
            </MarkButton>
          </div>
          <div className="mt-[10px] flex items-center pl-[11px]">
            <FourDots k="h-3.5 w-3.5" />
            <span className="ml-[6px] flex h-6 w-[177px] items-center rounded-full bg-[#4996b2] pl-[13px] font-medium tracking-[0.500px] text-white">City</span>
          </div>
          <div className="mt-[3px] flex items-center pl-[11px]">
            <Detail k="h-2.5 w-3.5" />
            <span className="ml-[6px] flex h-6 w-[177px] items-center rounded-full bg-[#d4d4d4] pb-px pl-[13px] font-medium tracking-[0.300px] text-[#222]">Multiple fields</span>
          </div>
        </div>
        <div className="flex h-10 items-center border-b border-[#dcdcdc] pl-[10px] text-[16.5px] tracking-[0.450px] text-[#222]">
          <World />
          <span className="ml-[10px]">AVG(Longitude)</span>
        </div>
        <div className="flex h-[39px] items-center pl-[10px] text-[16.5px] tracking-[0.450px] text-[#222]">
          <World />
          <span className="ml-[10px]">AVG(Longitude) (2)</span>
        </div>
      </div>
    </div>
  );
}

const pill = "flex h-6 w-[178px] items-center bg-[#00b180] pb-px pl-[13px] text-[14.5px] font-medium tracking-[0.550px] text-white";
function Shelves() {
  return (
    <>
      <div className={`${card} flex h-8 w-[1411px] items-center text-[14.5px] tracking-[0.200px] text-[#555]`}>
        <svg viewBox="0 0 12 13" className="mb-[2px] ml-[7px] h-[13px] w-3"><path d="M0 0h2v2H0zM5 0h2v2H5zM10 0h2v2h-2zM0 3h2v9H0zM5 3h2v9H5zM10 3h2v9h-2z" fill="#666" /></svg>
        <span className="ml-[8px] w-[131px]">Columns</span>
        <span className="h-full w-px bg-[#d4d4d4]" />
        <span className={`${pill} ml-[2px] rounded-l-full`}>AVG(Longitude)</span>
        <span className={`${pill} ml-[2px] rounded-r-full`}>AVG(Longitude)</span>
      </div>
      <div className={`${card} mt-[6px] flex h-8 w-[1411px] items-center text-[14.5px] tracking-[0.200px] text-[#555]`}>
        <svg viewBox="0 0 12 11" className="mb-[2px] ml-[7px] h-[11px] w-3"><path d="M0 0h2v2H0zM0 4.500h2v2H0zM0 9h2v2H0zM3 0h9v2H3zM3 4.500h9v2H3zM3 9h9v2H3z" fill="#666" /></svg>
        <span className="ml-[8px] w-[131px]">Rows</span>
        <span className="h-full w-px bg-[#d4d4d4]" />
        <span className={`${pill} ml-[2px] rounded-full`}>AVG(Latitude)</span>
      </div>
    </>
  );
}

const cities: [string, string][] = [
  ["Antwerp", "bg-[#6688b4]"], ["Beauvechain", "bg-[#aed2ec]"], ["Bertrix", "bg-[#f59d49]"], ["Brussels", "bg-[#ffc78e]"],
  ["Charleroi", "bg-[#6fae68]"], ["Chievres", "bg-[#9bd98e]"], ["Florennes", "bg-[#c0a748]"], ["GOETSENHOVEN", "bg-[#f4d57a]"],
  ["Hasselt", "bg-[#61a6a2]"], ["Kleine Brogel", "bg-[#97c6c0]"], ["Knokke", "bg-[#e86d6f]"], ["Koksijde", "bg-[#ffaaa8]"],
  ["Kortrijk-vevelgem", "bg-[#8b8280]"], ["Leopoldsburg", "bg-[#c4bbb8]"], ["Liege", "bg-[#da84a4]"], ["Namur", "bg-[#fbc8d9]"],
  ["Ostend", "bg-[#ba8bac]"], ["Sint-truiden", "bg-[#d9b2d0]"], ["Spa", "bg-[#ab8874]"], ["St.-hubert", "bg-[#dfc0b4]"],
  ["Ursel", "bg-[#6688b4]"], ["Weelde", "bg-[#aed2ec]"], ["Zoersel", "bg-[#f59d49]"], ["Zutendaal", "bg-[#ffc78e]"],
];
function Legends() {
  return (
    <div className="ml-[6px] w-[194px] shrink-0 text-[14.5px] tracking-[0.320px] text-[#444]">
      <div className="h-[69px] border border-[#d4d4d4] bg-white">
        <div className="h-[35px] whitespace-nowrap bg-[#fafafa] pl-[7px] pt-[8px] leading-5">Country (airports.csv)</div>
        <div className="ml-[3px] mt-[3px] flex h-[25px] w-[186px] items-center rounded-[2px] border border-[#c4c4c4] pl-[3px] text-[12.5px] text-[#557fae]">
          Belgium
          <span className="ml-auto grid h-full w-[22px] place-items-center border-l border-[#ccc]">
            <Caret c="#4e79a7" />
          </span>
        </div>
      </div>
      <div className="mt-[6px] h-[542px] border border-[#d4d4d4] bg-white">
        <div className="h-[35px] bg-[#fafafa] pl-[7px] pt-[8px] leading-5">City</div>
        {cities.map(([n, c]) => (
          <div key={n} className="flex h-[21px] items-center pl-1">
            <span className={`h-[13px] w-[13px] border border-[#666] ${c}`} />
            <span className="ml-[5px] whitespace-nowrap text-[14.5px] tracking-[0.400px] text-[#6189b4]">{n}</span>
          </div>
        ))}
      </div>
    </div>
  );
}

/* ------------------------------------------------------------------ */
/* Sheet strip                                                         */
/* ------------------------------------------------------------------ */
const svgT = "block h-full w-full";
const americas = "M48 0L52 8 57 20 66 28 74 32 84 36 90 42 97 46 99 54 98 62 104 70 106 74V44L100 46 95 42 92 36 88 34 82 32 80 22 84 15 92 12 98 14 101 20 103 14 106 8V0Z";
function Lines({ x, y, rows, cols, dy = 4.2 }: { x: number; y: number; rows: number; cols: [number, number][]; dy?: number }) {
  return (
    <g>
      {Array.from({ length: rows }).map((_, i) => (
        <g key={i}>
          {cols.map(([cx, w], j) => (
            <path key={j} d={`M${x + cx} ${y + i * dy}h${w - ((i * 7 + j * 3) % 5) * w * 0.08}`} stroke="#8ba8cb" strokeWidth="1.700" strokeDasharray="2.500 .6 1.800 .4 3 .8" opacity=".45" />
          ))}
          <path d={`M${x + cols[0][0]} ${y + i * dy + 2.1}H106`} stroke="#e8e8e8" strokeWidth=".5" />
        </g>
      ))}
    </g>
  );
}
function Histogram({ x, y, s }: { x: number; y: number; s: number }) {
  const bars = [28, 4, 0, 9, 20, 11, 0, 8, 0, 1, 9, 69, 36, 34];
  return (
    <g>
      {bars.map((h, i) => (
        <rect key={i} x={x + i * 3.45 * s} y={y - h * (s < 1 ? 0.85 : 1)} width={3.45 * s} height={h} fill="#44709f" stroke="#fff" strokeWidth=".2" />
      ))}
    </g>
  );
}
const tiny = "'Noto Sans', sans-serif";
const thumbs: React.ReactNode[] = [
  <div className="grid h-full place-items-center whitespace-nowrap bg-[#fafafa] pb-[2px] text-[17px] tracking-[0px] text-[#555]">Data Source</div>,
  <svg viewBox="0 0 106 75" className={svgT}>
    <path d={americas} fill="#f8ab62" stroke="#c98343" strokeWidth=".7" />
    <path d="M94 20l6 1 5 4M98 27l4 1" stroke="#e9974c" strokeWidth="1.600" fill="none" />
    <path d="M3 24l2 1M85 51l2 1M15 70l2 1M25 68l2 3" stroke="#a98" strokeWidth="1" />
  </svg>,
  <svg viewBox="0 0 106 75" className={svgT}>
    <path d="M2 2H64L66 12 60 24 52 30 50 34 61 35 58 40 50 44 42 48 32 47 20 50 2 54ZM106 14L102 18 99 26 96 29 88 37 80 42 64 45 62 58 52 68 44 75H106Z" fill="#e2e2e2" />
    <path d="M80 42l2 6 6 1 4 8 4 1 4 8M106 30l-8 4-6 4M64 62l6 5 0 8M98 48l4 7-2 6M88 37l3 4 6-2 5 4" fill="none" stroke="#8d8d8d" strokeWidth=".6" />
    <text x="13" y="11" fontSize="4" fontFamily={tiny} fill="#777">United</text>
    <text x="11.500" y="16" fontSize="4" fontFamily={tiny} fill="#777">Kingdom</text>
    <text x="76" y="69" fontSize="3" fontFamily={tiny} fill="#999">Hauts-de-</text>
    <circle cx="81" cy="42" r=".8" fill="#e15759" /><circle cx="91" cy="37" r=".8" fill="#e15759" /><circle cx="90" cy="49" r=".8" fill="#666" />
  </svg>,
  <svg viewBox="0 0 106 75" className={svgT}>
    <path d="M31 41Q36 36 46 36 61 37 60 46 59 57 48 57H36H48Q62 58 62 70L60 78M72 41Q78 36 86 36 100 37 99 46 98 57 88 57H77H88Q101 59 100 70L98 78" fill="none" stroke="#f6983f" strokeWidth="4" strokeLinecap="round" />
    <path d="M29 71v4M69 72v3" stroke="#fbd3ae" strokeWidth="3" />
  </svg>,
  <svg viewBox="0 0 106 75" className={svgT}>
    <Lines x={3} y={8} rows={1} cols={[[0, 5]]} />
    <Lines x={18} y={8} rows={17} cols={[[0, 30], [31, 22], [62, 7], [80, 8]]} />
    <path d="M80 8h7v66h-7M95 2v73" fill="#eee" fillOpacity=".5" stroke="#eee" strokeWidth=".5" />
  </svg>,
  <svg viewBox="0 0 106 75" className={svgT}>
    <path d="M70 22h36v16H70zM70 55h36v16H70z" fill="#f3f3f3" />
    <path d="M3 5h103M3 22h103M3 38h103M3 55h103M3 71h103M91 2v73" stroke="#ddd" strokeWidth=".7" />
    {[["Daocheng Yading", "Airport", "Daocheng", "ZUDC", "14,472"], ["Qamdo Bangda", "Airport", "Bangda", "ZUBD", "14,219"], ["Kangding Airport", "", "Kangding", "ZUKD", "14,042"], ["Ngari Gunsa Airport", "", "Shiquanhe", "ZUAL", "14,022"]].map((r, i) => (
      <g key={i} fontSize="4" fontFamily={tiny} fill="#6f92bd">
        <text x="4" y={13 + i * 16.5} fontWeight="700" textLength={r[1] ? 30 : 34}>{r[0]}</text>
        <text x="4" y={18 + i * 16.5} fontWeight="700">{r[1]}</text>
        <text x="45" y={16 + i * 16.5}>{r[2]}</text>
        <text x="71" y={16 + i * 16.5}>{r[3]}</text>
        <text x="92" y={16 + i * 16.5}>{r[4]}</text>
      </g>
    ))}
  </svg>,
  <svg viewBox="0 0 106 75" className={svgT}>
    <Lines x={4} y={8} rows={17} cols={[[0, 5], [16, 9], [32, 25], [64, 20]]} />
    <path d="M100 7v68" stroke="#f28e2b" strokeWidth="2.400" strokeDasharray="2.200 2" />
    <path d="M100 11v64" stroke="#44709f" strokeWidth="2.400" strokeDasharray="2.200 6.200 2.200 10.600" />
  </svg>,
  <svg viewBox="0 0 106 75" className={svgT}>
    <path d="M14 9h90M14 26h90M14 44h90M14 61h90M20 2v73M55 2v73M88 2v73" stroke="#f0f0f0" strokeWidth=".6" />
    <path d="M5 32v32" stroke="#a9bcd4" strokeWidth="1.200" strokeDasharray="2 .7" />
    <path d="M9 9h3M9 17h3M9 26h3M9 35h3M9 44h3M9 52h3M9 61h3M9 70h3" stroke="#a9bcd4" />
    <Histogram x={17} y={75} s={1} />
  </svg>,
  <svg viewBox="0 0 106 75" className={svgT}>
    <text x="3" y="7" fontSize="4" fontFamily={tiny} fill="#777" textLength="25">AIRPORT FINAL</text>
    <path d="M30 9H85L82 18 78 16 66 18 64 26 66 31 72 34 78 38 84 42 88 44 96 42 106 48V75H88L78 62 82 54 80 46 72 40 62 36 50 32 44 26 36 20Z" fill="#f3e8dc" stroke="#eadccb" strokeWidth=".5" />
    <path d="M87 41l-4 4 1 5-3 5 4 4 4 0 4 4 1-6 2-2-1-7-4-2-1-4z" fill="#f99d4b" stroke="#b98" strokeWidth=".6" />
  </svg>,
  <svg viewBox="0 0 106 75" className={svgT}>
    <text x="5" y="10" fontSize="3.800" fontFamily={tiny} fill="#777" textLength="60">NUMBER OF FLIGHTS FROM AIRPORT</text>
    <text x="97" y="10.500" fontSize="3.800" fontFamily={tiny} fill="#777">AIRL</text>
    <path d="M14 18h80M14 32h80M14 47h80M50 16v59M80 16v59" stroke="#f3f3f3" strokeWidth=".6" />
    <path d="M10 18h2M10 25h2M10 32h2M10 40h2M10 47h2M10 55h2M98 17h3" stroke="#a9bcd4" />
    <path d="M7 38v30" stroke="#a9bcd4" strokeDasharray="2 .7" />
    <Histogram x={15} y={75} s={0.43} />
    <path d="M99 34v40" stroke="#8ba8cb" strokeWidth="3.500" strokeDasharray="1.500 1" opacity=".7" />
  </svg>,
  <svg viewBox="0 0 106 75" className={svgT}>
    <text x="2" y="6.500" fontSize="4" fontFamily={tiny} fill="#666" textLength="76">Airports at higher altitude within a country</text>
    <text x="99" y="6.500" fontSize="4" fontFamily={tiny} fill="#666">Airp</text>
    <Lines x={3} y={14} rows={1} cols={[[0, 5]]} />
    <Lines x={14} y={14} rows={21} dy={3} cols={[[0, 20], [22, 16], [43, 5], [56, 6]]} />
    <path d="M80 10h26v65H80z" fill="#fff" /><path d="M98 56h8v10h-8z" fill="#86c1cc" />
    <path d="M99 20h7M99 23h4M99 32h7M99 35h4M99 42h6M99 51h6M99 60h6M99 63h5M99 71h6" stroke="#8ba8cb" strokeWidth="1.200" />
  </svg>,
  <svg viewBox="0 0 106 75" className={svgT}>
    <text x="29" y="6" fontSize="4.200" fontWeight="700" fontFamily={tiny} fill="#666" textLength="76">GLOBAL AIR TRANSPORTATION NETWO</text>
    <path d="M39 9.500h62v10H39z" fill="#e9e9e9" /><path d="M81 9.500h20v10H81z" fill="#cfcfcf" />
    <path d="M41 12.500h14M62 12.500h14M83 12.500h15M41 15.500h16M62 15.500h16M83 15.500h16" stroke="#aaa" strokeWidth="1" strokeDasharray="3 .7" />
    <text x="6" y="31" fontSize="3.800" fontFamily={tiny} fill="#777" textLength="60">NUMBER OF FLIGHTS FROM AIRPORT</text>
    <text x="99" y="31" fontSize="3.800" fontFamily={tiny} fill="#777">AIRL</text>
    <path d="M11 39h3M11 46h3M11 54h3M11 61h3M11 69h3M100 38h3" stroke="#a9bcd4" />
    <path d="M8 60v15" stroke="#a9bcd4" strokeDasharray="2 .7" />
    <path d="M17 72h1.600v3H17zM33 37h1.700v38H33zM34.700 64h1.500v11h-1.500zM36.200 66h1.300v9h-1.300z" fill="#44709f" />
    <path d="M101 53v20" stroke="#8ba8cb" strokeWidth="3.500" strokeDasharray="1.500 1" opacity=".7" />
  </svg>,
];
const tabs: [string, string][] = [
  ["Data Source", "src"], ["AIRPORT FIN...", ""], ["WORLD MAP...", "on"], ["NUM OF AIRP...", ""], ["AIRPORT AT ...", ""], ["AIRPORTS AT...", ""],
  ["AIRLINES WI...", ""], ["NUMBER OF ...", ""], ["Dashboard 2", "d"], ["Dashboard 3", "d"], ["Dashboard 4", "d"], ["Story 1", "s"],
];
function SheetStrip() {
  return (
    <div className="flex h-[121px] shrink-0 border-y border-[#c9c9c9] bg-[#e6e6e6] text-[15.5px] tracking-[-0.25px] text-[#555]">
      {tabs.map(([label, kind], i) => (
        <div key={label} className={`flex ${i === 0 ? "w-[124px]" : "w-[123.050px]"} shrink-0 flex-col border-r border-[#c4c4c4] pt-[7px] ${kind === "on" ? "bg-[#fafafa]" : ""}`}>
          <div className={`${i === 1 ? "ml-[7px]" : "ml-[8px]"} h-[77px] w-[108px] overflow-hidden border bg-white ${kind === "on" ? "border-[#d8d8d8]" : "border-[#aeaeae]"}`}>{thumbs[i]}</div>
          <div className={`mt-[8px] flex h-6 items-center whitespace-nowrap ${i === 0 ? "pl-[10px]" : i === 1 ? "pl-[11px]" : i === 2 || i >= 8 ? "pl-[8px]" : "pl-[7px]"} ${kind === "on" ? "text-[15px] font-semibold tracking-[0px] text-[#444]" : ""}`}>
            {kind === "src" && (
              <I k="mb-[2px] mr-[7px] h-3 w-[9px]" vb="0 0 9 12" sw={1}><path d="M.6 2.500v7q0 2 3.900 2t3.900-2v-7M.6 2.500q0-2 3.900-2t3.900 2-3.900 2-3.900-2" /></I>
            )}
            {kind === "d" && <span className="mb-[2px] mr-[5px]"><DashIcon /></span>}
            {kind === "s" && <span className="mb-[2px] mr-[5px]"><StoryIcon /></span>}
            {label}
          </div>
        </div>
      ))}
      <div className="flex w-8 shrink-0 flex-col border-r border-[#c4c4c4]">
        {[
          <path key="a" d="M11 6V1H1v11h6M4 9V7M6 9V4M8 8V6" />,
          <path key="b" d="M11.500 6V1H1v10.500h6M6.200 1v10M1 6.200h10" />,
          <path key="c" d="M11.500 7V1.500L9 1 6.200 3 3.500 1 1 1.500v9.500l2.500-.3L6.200 12.500V3" />,
        ].map((p, i) => (
          <div key={i} className={`grid flex-1 place-items-center ${i < 2 ? "border-b border-[#c4c4c4]" : ""}`}>
            <I k="h-4 w-4" vb="0 0 16 16" sw={1.2}>
              {p}
              <path d="M11.500 7.500v8M7.500 11.500h8" strokeWidth="1.900" />
            </I>
          </div>
        ))}
      </div>
    </div>
  );
}

function StatusBar() {
  return (
    <div className="flex h-[27px] shrink-0 items-center border-b border-[#b5b0a8] bg-[#ebebeb] text-[13.500px] tracking-[-0.230px] text-[#222]">
      <span className="ml-[3px] w-[76px]">48 marks</span>
      <span className="w-[126px]">1 row by 1 column</span>
      <span>SUM of AVG(Longitude): 221.070</span>
      <div className="ml-auto flex h-full">
        <div className="flex w-[158px] items-center border-l border-[#cacaca] pl-[6px]">
          <I k="h-[13px] w-[10px]" vb="0 0 10 13" sw={1}><circle cx="5" cy="3.300" r="2.600" /><path d="M.7 12.300V9.500q0-2 2-2h4.600q2 0 2 2v2.800z" /></I>
          <span className="ml-[10px]">Pavithra&nbsp; K</span>
          <Caret c="#000" k="ml-auto mr-[10px] !h-[5px] !w-2" />
        </div>
        <div className="w-8 border-l border-[#cacaca]" />
        <div className="w-8 border-l border-[#cacaca]" />
        <div className="w-[57px] border-l border-[#cacaca]" />
        <svg viewBox="0 0 71 26" className="h-[26px] w-[71px]" fill="#bbb">
          <path d="M0 0h1v26H0zM70 0h1v26h-1zM8 8h1.500v9H8zM14.500 8v9l-4.500-4.500zM29 8v9l-4.500-4.500zM41 8v9l4.500-4.500zM56 8v9l4.500-4.500zM61 8h1.500v9H61z" />
        </svg>
        <svg viewBox="0 0 69 26" className="h-[26px] w-[69px]">
          <path d="M8 7h3v3H8zM12 7h3v3h-3zM16 7h3v3h-3zM8 11h3v3H8zM12 11h3v3h-3zM16 11h3v3h-3zM8 15h3v3H8zM12 15h3v3h-3zM16 15h3v3h-3zM52 7h11v11H52z" fill="#bdbdbd" />
          <path d="M30 7h11v7.500H30zM30 15.500h3V18h-3zM34 15.500h3V18h-3zM38 15.500h3V18h-3z" fill="#555" />
        </svg>
      </div>
    </div>
  );
}

/* ------------------------------------------------------------------ */
/* Taskbar                                                             */
/* ------------------------------------------------------------------ */
function TaskApp({ children, run = false, k = "" }: { children: React.ReactNode; run?: boolean; k?: string }) {
  return (
    <div className={`flex h-full w-[30px] flex-col items-center pt-[15px] ${k}`}>
      <div className="h-[30px] w-[30px]">{children}</div>
      {run && <span className="mt-[4px] h-1 w-[7px] rounded-full bg-[#857c76]" />}
    </div>
  );
}
const ic = "block h-[30px] w-[30px]";
function Taskbar() {
  return (
    <div className="flex h-[59px] shrink-0 items-center bg-[linear-gradient(90deg,#e6dbd2_0px,#ebd9d0_150px,#eddccb_260px,#f5e9bd_370px,#f5e9bc_420px,#efdfc9_500px,#f1ddcc_570px,#f6e5cb_680px,#efdccd_800px,#ecd8cf_960px,#efddce_1060px,#f6eabd_1130px,#f5e8c0_1175px,#efdcce_1260px,#efdbcd_1400px,#ebdccf_1550px,#e4dbd1_1780px,#e2dad2_1920px)]">
      <svg viewBox="0 0 30 22" className="ml-[24px] h-[22px] w-[30px]" fill="none" stroke="#7d9cc5" strokeLinecap="round" strokeWidth="3">
        <path d="M2 10h15q4-1 3.500-5t-5-2" stroke="#9cb2d6" />
        <path d="M2 14h22q4-.5 3.500-4T23 8M17 14q5 0 5 3.500T18 19" />
      </svg>
      <div className="ml-[10px] mt-[-2px] w-[485px] text-[14.500px] leading-[20px]">
        <div className="tracking-[-0.300px] text-[#222]">32°C</div>
        <div className="tracking-[0.080px] text-[#5f5a56]">High winds soon</div>
      </div>
      <svg viewBox="0 0 30 30" className="ml-[7px] h-[29px] w-[30px]">
        <defs><linearGradient id="win" x2="1" y2="1"><stop stopColor="#45cbfb" /><stop offset="1" stopColor="#0072cc" /></linearGradient></defs>
        <path d="M1 1h13.500v13.500H1zM15.500 1H29v13.500H15.500zM1 15.500h13.500V29H1zM15.500 15.500H29V29H15.500z" fill="url(#win)" />
      </svg>
      <div className="ml-[17px] flex h-[38px] w-[274px] items-center rounded-full border border-[#e3d5c8] bg-[#fcf6ef] pl-[13px] text-[16px] text-[#555]">
        <I k="h-[19px] w-[19px]" vb="0 0 19 19" c="#222" sw={1.9}><circle cx="8" cy="8" r="6.500" /><path d="M12.500 12.500l5.500 5.500" /></I>
        <span className="ml-[12px]">Search</span>
        <svg viewBox="0 0 58 34" className="ml-auto mr-[5px] h-[34px] w-[58px]">
          <path d="M3 31V17l4-5 4 5v14z" fill="#8d9b95" /><path d="M15 31V13h2V7l3-6 3 6v6h2v18z" fill="#a58f83" />
          <path d="M27 31V18h5v13z" fill="#8a98a5" /><path d="M34 31V3h5v28z" fill="#9fb0bb" /><path d="M39 31V10h5v21z" fill="#a48779" />
          <path d="M47 31V15l8-2v18z" fill="#4e8ba0" /><path d="M48 18h6M48 21h6M48 24h6" stroke="#e8dcae" /><path d="M18 10v20M22 10v20" stroke="#dccabb" strokeWidth=".8" />
          <path d="M3 33q2-5 7-3 4-4 8-1 6-4 10 0 5-5 9 0 5-3 9 0 7-2 9 4z" fill="#e9e3e1" />
        </svg>
      </div>
      <TaskApp k="ml-[16px]">
        <svg viewBox="0 0 30 30" className={ic}><path d="M1 8h21v21H1z" fill="#262626" /><path d="M9 1h21v19H9z" fill="#eee" opacity=".9" /><path d="M9 8h13v12H9z" fill="#a5a5a5" /></svg>
      </TaskApp>
      <TaskApp k="ml-[25px]">
        <svg viewBox="0 0 30 30" className={ic}><path d="M15 1a14 14 0 1 1-6 26.500L2 29l1-7A14 14 0 0 1 15 1z" fill="#6264c0" /><rect x="7" y="9.500" width="11" height="11" rx="2" fill="#fff" /><path d="M19 13.500l4-3v9l-4-3z" fill="#fff" /></svg>
      </TaskApp>
      <TaskApp k="ml-[25px]">
        <svg viewBox="0 0 30 30" className={ic}><path d="M0 3q0-1 1.500-1H10l3 3.500h15q2 0 2 2V12H0z" fill="#e3a40f" /><path d="M0 9h12l2.500-3H28q2 0 2 2v19q0 2-2 2H2q-2 0-2-2z" fill="#fccd3e" /><path d="M6 29v-6q0-2 2-2h14q2 0 2 2v6z" fill="#1680d0" /><path d="M11 25h8" stroke="#0a4f93" strokeWidth="1.500" /></svg>
      </TaskApp>
      <TaskApp k="ml-[25px]">
        <svg viewBox="0 0 30 30" className={ic}><path d="M9 7V2.500Q9 1.500 10 1.500h10q1 0 1 1V7" fill="none" stroke="#35b6ee" strokeWidth="2" /><path d="M0 6h30v20q0 3-3 3H3q-3 0-3-3z" fill="#15528d" /><path d="M9 11.500h5.500V17H9z" fill="#f25022" /><path d="M15.500 11.500H21V17h-5.500z" fill="#7fba00" /><path d="M9 18h5.500v5.500H9z" fill="#00a4ef" /><path d="M15.500 18H21v5.500h-5.500z" fill="#ffb900" /></svg>
      </TaskApp>
      <TaskApp k="ml-[25px]">
        <svg viewBox="0 0 30 30" className={ic}><circle cx="15" cy="15" r="13.800" fill="none" stroke="#1a1a1a" strokeWidth="1.800" /><text x="3.500" y="18.800" fontSize="10" fontWeight="900" fontFamily="Inter, sans-serif" textLength="23" lengthAdjust="spacingAndGlyphs" fill="#1a1a1a">DELL</text></svg>
      </TaskApp>
      <TaskApp k="ml-[25px]" run>
        <svg viewBox="0 0 30 30" className={ic}>
          <defs>
            <linearGradient id="eg" x2="1"><stop stopColor="#1f9fe0" /><stop offset="1" stopColor="#62d95a" /></linearGradient>
          </defs>
          <circle cx="15" cy="15" r="14.500" fill="#1467b8" />
          <path d="M.6 14A14.500 14.500 0 0 1 29.500 14q0 6.500-7 6.500-6 0-5-3 1.500-3-1-6Q9 6 .6 14z" fill="url(#eg)" />
          <path d="M.6 14Q4 9 11 9.500 7 15 9.500 21T18 29.200Q3 31 .6 14z" fill="#1b82d4" />
          <path d="M12.500 14q3-3 4.800.5 0 2-.6 3.500.8 4 8 2.500l3.500-1v2.500l-3 1.500q-6 2.500-12-2-2-3.500-.7-7z" fill="#f1e4c2" />
        </svg>
      </TaskApp>
      <TaskApp k="ml-[25px]" run>
        <svg viewBox="0 0 30 30" className={ic}>
          <defs><linearGradient id="wp" x2=".4" y2="1"><stop stopColor="#9a45f5" /><stop offset=".6" stopColor="#f0309a" /><stop offset="1" stopColor="#ff4a3c" /></linearGradient></defs>
          <circle cx="15" cy="15" r="14.800" fill="url(#wp)" />
          <path d="M6 11h4l3 10.500L17 12l2 9.500L23.500 11M12 11h6" fill="none" stroke="#fff" strokeWidth="2.200" strokeLinejoin="round" /><path d="M24 4v5M21.500 6.500h5" stroke="#fff" strokeWidth="1.200" />
        </svg>
      </TaskApp>
      <TaskApp k="ml-[25px]" run>
        <svg viewBox="0 0 30 30" className="block h-[30px] w-[30px] overflow-visible">
          <circle cx="14.500" cy="15" r="14" fill="#35a853" /><path d="M2.400 8A14 14 0 0 1 26.600 8H14.500L8.400 18.500z" fill="#e8402f" /><path d="M26.600 8A14 14 0 0 1 14.500 29l6-10.500Q22 12 14.500 8z" fill="#fbc116" />
          <circle cx="14.500" cy="15" r="6.600" fill="#fff" /><circle cx="14.500" cy="15" r="5.300" fill="#2f7de9" />
          <circle cx="24.500" cy="4" r="9.800" fill="#1380c9" /><text x="24.500" y="8.200" textAnchor="middle" fontSize="11.500" fontFamily="'Open Sans', sans-serif" fill="#d9ecf8">P</text>
        </svg>
      </TaskApp>
      <div className="ml-[15px] flex h-[48px] w-[48px] flex-col items-center rounded-[5px] border border-[#f5eae1] bg-[#f7ece5] pt-[9px]">
        <span className="grid h-[27px] w-[27px] place-items-center bg-white shadow-[1px_1px_1px_#bbb]"><TableauMark k="h-6 w-6" /></span>
        <span className="mt-[7px] h-1 w-5 rounded-full bg-[#1277d4]" />
      </div>
      <svg viewBox="0 0 220 40" className="ml-[190px] h-10 w-[220px]" fill="none" stroke="#222" strokeWidth="1.600">
        <path d="M5 24l6.500-7 6.500 7" />
        <path d="M45 24q-4-1-4-4.500t5-4.500q2-5 7-5t7 6q3 1 3 4" fill="#8b8b8b" /><path d="M45 24h6" />
        <circle cx="55" cy="24.500" r="6" fill="#fff" stroke="none" /><path d="M51.500 24a3.600 3.600 0 0 1 6.500-1.500M58.500 25a3.600 3.600 0 0 1-6.500 1.500M58 20v3h-3M52 29.500v-3h3" stroke="#1478c8" strokeWidth="1.300" />
        <path d="M82 18a10 10 0 0 1 17-5M99 8v6h-6M83 30v-6h6M83 24q2 5 6 7" />
        <circle cx="97" cy="26" r="5" fill="#ff9b0b" stroke="none" />
        <path d="M122 18q9.500-9.500 19 0M125 21.500q6.500-6.500 13 0M128 25q3.500-3.500 7 0" strokeWidth="1.500" /><circle cx="131.500" cy="27" r="1.500" fill="#222" stroke="none" />
        <path d="M152 17.500h3.500l5-4.500v15l-5-4.500H152zM163.500 17q2 3.500 0 7M166.500 14.500q4 6 0 12M169.500 12q5.500 8.500 0 17" strokeWidth="1.300" />
        <path d="M187 15h13v11h-17v-5M202 18v5" /><path d="M187 17.500h11v6.500h-13z" fill="#222" stroke="none" /><path d="M184 10l-2 6h4l-2 5" />
      </svg>
      <div className="ml-auto mt-[-2px] whitespace-nowrap text-right text-[14.500px] leading-[20px] tracking-[0.050px] text-[#222]">
        <div>2:52 PM</div>
        <div>10/13/2023</div>
      </div>
      <div className="ml-3 mr-[23px] grid h-6 w-6 shrink-0 place-items-center rounded-full bg-[#1277d4] text-[12px] text-white">28</div>
    </div>
  );
}

/* ------------------------------------------------------------------ */

export default function App() {
  return (
    <div className="flex h-[1080px] w-[1920px] flex-col overflow-hidden bg-[#f4f4f4] font-['Open_Sans',sans-serif]">
      <TitleBar />
      <div className="flex h-[25px] shrink-0 items-center bg-white pl-2 pt-[2px] text-[14.500px] tracking-[-0.320px] text-black">
        {menus.map(([m, w]) => (
          <span key={m} className={`${w} whitespace-nowrap`}>{m}</span>
        ))}
      </div>
      <Toolbar />
      <div className="flex h-[768px] shrink-0">
        <DataPane />
        <SideCards />
        <div className="ml-[6px] flex flex-col">
          <Shelves />
          <div className="mt-[6px] flex">
            <div className="h-[686px] w-[1211px] border border-[#d4d4d4] bg-white pl-[10px]">
              <div className="flex h-[55px] items-center pl-px pt-[3px] text-[25px] font-light tracking-[0.420px] text-[#333]">WORLD MAP OF ALL AIRPORTS</div>
              <div className="relative h-[620px] w-[1190px] border border-[#e0e0e0]">
                <BaseMap />
                <span className="absolute bottom-px left-0 bg-white/75 px-[5px] font-['Liberation_Sans',sans-serif] text-[13px] leading-[17px] text-[#555]">© 2023 Mapbox © OpenStreetMap</span>
                <span className="absolute bottom-[5px] right-[5px] grid h-[25px] w-[116px] place-items-center rounded-[3px] bg-[#acacac] font-['Noto_Sans',sans-serif] text-[16px] font-bold text-white">48 unknown</span>
              </div>
            </div>
            <Legends />
          </div>
        </div>
      </div>
      <SheetStrip />
      <StatusBar />
      <Taskbar />
    </div>
  );
}
